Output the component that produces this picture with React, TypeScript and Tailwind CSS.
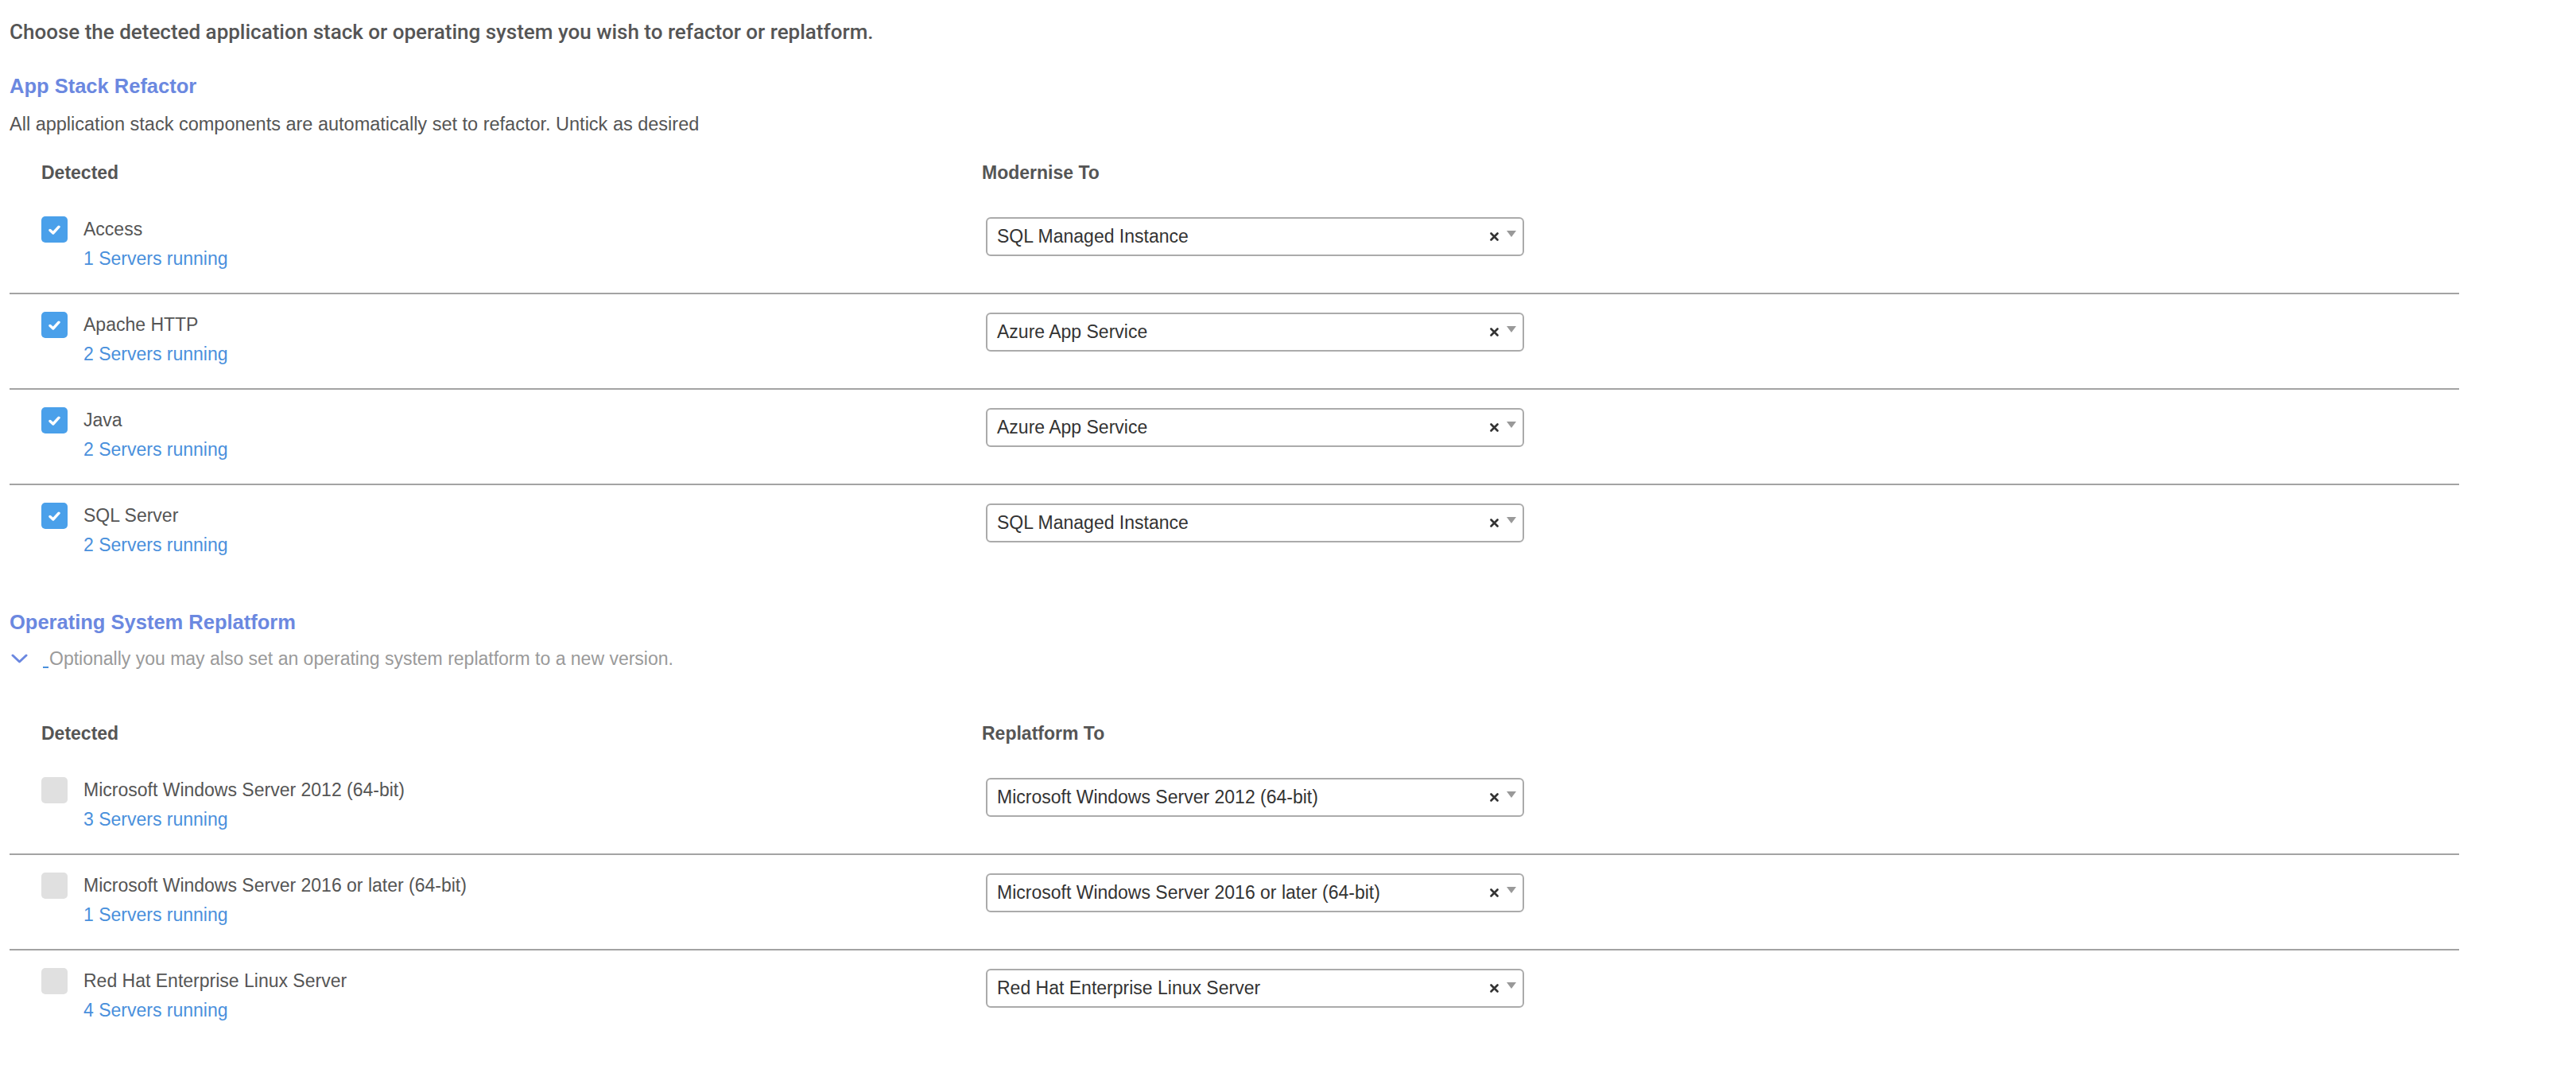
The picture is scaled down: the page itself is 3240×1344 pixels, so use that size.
import React from "react";

type Row = { name: string; servers: string; target: string; checked: boolean };

const stackRows: Row[] = [
  { name: "Access", servers: "1 Servers running", target: "SQL Managed Instance", checked: true },
  { name: "Apache HTTP", servers: "2 Servers running", target: "Azure App Service", checked: true },
  { name: "Java", servers: "2 Servers running", target: "Azure App Service", checked: true },
  { name: "SQL Server", servers: "2 Servers running", target: "SQL Managed Instance", checked: true },
];

const osRows: Row[] = [
  {
    name: "Microsoft Windows Server 2012 (64-bit)",
    servers: "3 Servers running",
    target: "Microsoft Windows Server 2012 (64-bit)",
    checked: false,
  },
  {
    name: "Microsoft Windows Server 2016 or later (64-bit)",
    servers: "1 Servers running",
    target: "Microsoft Windows Server 2016 or later (64-bit)",
    checked: false,
  },
  {
    name: "Red Hat Enterprise Linux Server",
    servers: "4 Servers running",
    target: "Red Hat Enterprise Linux Server",
    checked: false,
  },
];

function Checkbox({ checked }: { checked: boolean }) {
  if (!checked) {
    return <div className="w-[33px] h-[33px] shrink-0 rounded-[5px] bg-[#e0e0e0]" />;
  }
  return (
    <div className="w-[33px] h-[33px] shrink-0 rounded-[5px] bg-[#4aa0ea] flex items-center justify-center">
      <svg width="15" height="12" viewBox="0 0 15 12" fill="none">
        <path d="M2 6.5 L5.8 10 L13 2.2" stroke="#ffffff" strokeWidth="3.4" strokeLinecap="round" strokeLinejoin="round" />
      </svg>
    </div>
  );
}

function Select({ value }: { value: string }) {
  return (
    <div className="ml-[5px] mt-[1px] w-[677px] h-[49px] border-2 border-[#ababab] rounded-[6px] bg-white flex items-center pl-[12px] pr-[8px]">
      <span className="flex-1 text-[23px] text-[#333] leading-none">{value}</span>
      <svg width="11" height="11" viewBox="0 0 11 11" className="mr-[10px]">
        <path d="M1.5 1.5 L9.5 9.5 M9.5 1.5 L1.5 9.5" stroke="#333" strokeWidth="2.6" strokeLinecap="round" />
      </svg>
      <svg width="12" height="8" viewBox="0 0 12 8" className="mb-[8px]">
        <path d="M0 0 L12 0 L6 8 Z" fill="#999" />
      </svg>
    </div>
  );
}

function TableRow({ row, last }: { row: Row; last: boolean }) {
  return (
    <div
      className={
        last
          ? "grid grid-cols-[1223px_1fr] pt-[22px] pb-[27px]"
          : "grid grid-cols-[1223px_1fr] pt-[22px] pb-[27px] border-b-2 border-[#a3a3a3]"
      }
    >
      <div className="flex pl-[40px] gap-[20px]">
        <Checkbox checked={row.checked} />
        <div>
          <div className="text-[23px] leading-[32px] text-[#555]">{row.name}</div>
          <div className="mt-[5px] text-[23px] leading-[32px] text-[#4a90dc]">{row.servers}</div>
        </div>
      </div>
      <div>
        <Select value={row.target} />
      </div>
    </div>
  );
}

function Table({ header, rows }: { header: string; rows: Row[] }) {
  return (
    <div className="mr-[147px]">
      <div className="grid grid-cols-[1223px_1fr] text-[23px] leading-[32px] font-bold text-[#555]">
        <div className="pl-[40px]">Detected</div>
        <div>{header}</div>
      </div>
      <div className="mt-[17px]">
        {rows.map((r, i) => (
          <TableRow key={r.name} row={r} last={i === rows.length - 1} />
        ))}
      </div>
    </div>
  );
}

export default function App() {
  return (
    <div className="w-full min-h-screen bg-white pl-[12px] pt-[24px] pb-[30px] font-['Liberation_Sans',Arial,sans-serif]">
      <div className="font-['Roboto','Liberation_Sans',sans-serif] font-medium text-[26px] leading-[32px] text-[#555]">
        Choose the detected application stack or operating system you wish to refactor or replatform.
      </div>

      <div className="mt-[36px] text-[25.5px] leading-[32px] font-bold text-[#6b88e0]">App Stack Refactor</div>
      <div className="mt-[17px] text-[23.5px] leading-[30px] text-[#555]">
        All application stack components are automatically set to refactor. Untick as desired
      </div>

      <div className="mt-[30px]">
        <Table header="Modernise To" rows={stackRows} />
      </div>

      <div className="mt-[38px] text-[25.5px] leading-[32px] font-bold text-[#6b88e0]">Operating System Replatform</div>
      <div className="mt-[15px] flex items-center h-[30px]">
        <svg width="21" height="12" viewBox="0 0 21 12" className="ml-[2px]">
          <path d="M2 2 L10.5 10 L19 2" stroke="#6b88e0" strokeWidth="3" fill="none" strokeLinecap="round" strokeLinejoin="round" />
        </svg>
        <span className="ml-[19px] self-end mb-[3px] inline-block w-[7px] h-[2px] bg-[#4a90dc]" />
        <span className="ml-[1px] text-[23px] leading-[30px] text-[#9a9a9a]">
          Optionally you may also set an operating system replatform to a new version.
        </span>
      </div>

      <div className="mt-[63px]">
        <Table header="Replatform To" rows={osRows} />
      </div>
    </div>
  );
}
